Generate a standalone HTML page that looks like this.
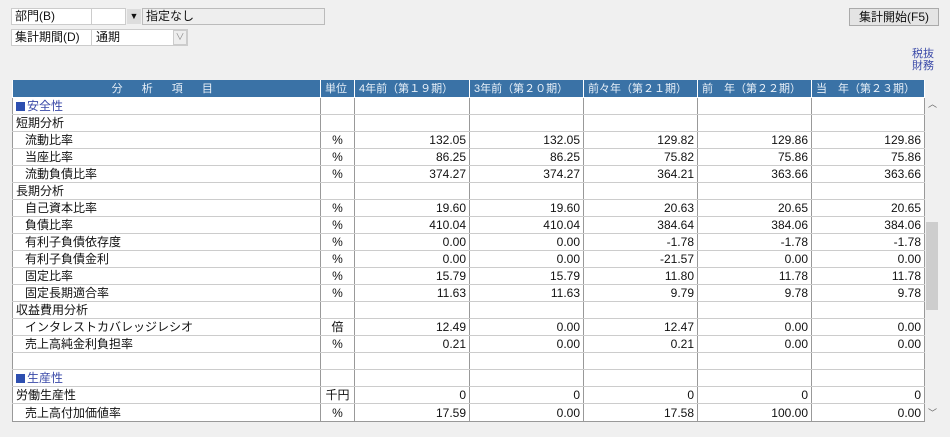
<!DOCTYPE html>
<html><head><meta charset="utf-8"><style>
body{margin:0;width:950px;height:437px;background:#f0f0f0;font-family:"Liberation Sans","Noto Sans CJK JP",sans-serif;font-size:12px;color:#111;position:relative;overflow:hidden}
.a{position:absolute;box-sizing:border-box}
table{position:absolute;left:12px;top:80px;border-collapse:collapse;table-layout:fixed;background:#fff}
td{height:16px;padding:0 3px;border-left:1px solid #999;border-right:1px solid #999;border-bottom:1px solid #ccc;white-space:nowrap;overflow:hidden;line-height:16px}
th{height:17px;background:#3a72a6;color:#e8f0f8;font-weight:normal;border-right:1px solid #fff;border-bottom:1px solid #fff;text-align:left;padding:0 4px;line-height:16px;font-size:11px;white-space:nowrap;overflow:hidden}
td.n{text-align:right}
td.u{text-align:center}
.i1{padding-left:12px}
.b{color:#3b4aa8}
.b:before{content:"";display:inline-block;width:9px;height:9px;background:#2d4fb0;margin-right:2px;vertical-align:-1px}
</style></head><body>
<div class="a" style="left:11px;top:8px;width:81px;height:17px;background:#fff;border:1px solid #ccc;padding-left:3px;line-height:15px">部門(B)</div>
<div class="a" style="left:91px;top:8px;width:35px;height:17px;background:#fff;border:1px solid #ccc"></div>
<div class="a" style="left:127px;top:9px;width:14px;height:15px;background:#ddd;text-align:center;font-size:9px;line-height:15px">▼</div>
<div class="a" style="left:142px;top:8px;width:183px;height:17px;background:#eee;border:1px solid #bbb;padding-left:3px;line-height:15px">指定なし</div>
<div class="a" style="left:11px;top:29px;width:81px;height:17px;background:#fff;border:1px solid #ccc;padding-left:3px;line-height:15px">集計期間(D)</div>
<div class="a" style="left:91px;top:29px;width:97px;height:17px;background:#fff;border:1px solid #ccc;padding-left:4px;line-height:15px">通期</div>
<div class="a" style="left:173px;top:30px;width:14px;height:15px;background:#eee;border:1px solid #ccc;text-align:center;font-size:9px;line-height:13px;color:#888">∨</div>
<div class="a" style="left:849px;top:8px;width:90px;height:18px;background:#e4e4e4;border:1px solid #aaa;text-align:center;line-height:16px">集計開始(F5)</div>
<div class="a" style="left:912px;top:48px;color:#3b4aa8;font-size:11px;line-height:12px">税抜<br>財務</div>
<table>
<colgroup><col style="width:308px"><col style="width:34px"><col style="width:115px"><col style="width:114px"><col style="width:114px"><col style="width:114px"><col style="width:113px"></colgroup>
<tr><th style="text-align:center;letter-spacing:8px">分 析 項 目</th><th>単位</th><th>4年前（第１９期）</th><th>3年前（第２０期）</th><th>前々年（第２１期）</th><th>前　年（第２２期）</th><th>当　年（第２３期）</th></tr>
<tr><td class="b">安全性</td><td></td><td></td><td></td><td></td><td></td><td></td></tr>
<tr><td>短期分析</td><td></td><td></td><td></td><td></td><td></td><td></td></tr>
<tr><td class="i1">流動比率</td><td class="u">%</td><td class="n">132.05</td><td class="n">132.05</td><td class="n">129.82</td><td class="n">129.86</td><td class="n">129.86</td></tr>
<tr><td class="i1">当座比率</td><td class="u">%</td><td class="n">86.25</td><td class="n">86.25</td><td class="n">75.82</td><td class="n">75.86</td><td class="n">75.86</td></tr>
<tr><td class="i1">流動負債比率</td><td class="u">%</td><td class="n">374.27</td><td class="n">374.27</td><td class="n">364.21</td><td class="n">363.66</td><td class="n">363.66</td></tr>
<tr><td>長期分析</td><td></td><td></td><td></td><td></td><td></td><td></td></tr>
<tr><td class="i1">自己資本比率</td><td class="u">%</td><td class="n">19.60</td><td class="n">19.60</td><td class="n">20.63</td><td class="n">20.65</td><td class="n">20.65</td></tr>
<tr><td class="i1">負債比率</td><td class="u">%</td><td class="n">410.04</td><td class="n">410.04</td><td class="n">384.64</td><td class="n">384.06</td><td class="n">384.06</td></tr>
<tr><td class="i1">有利子負債依存度</td><td class="u">%</td><td class="n">0.00</td><td class="n">0.00</td><td class="n">-1.78</td><td class="n">-1.78</td><td class="n">-1.78</td></tr>
<tr><td class="i1">有利子負債金利</td><td class="u">%</td><td class="n">0.00</td><td class="n">0.00</td><td class="n">-21.57</td><td class="n">0.00</td><td class="n">0.00</td></tr>
<tr><td class="i1">固定比率</td><td class="u">%</td><td class="n">15.79</td><td class="n">15.79</td><td class="n">11.80</td><td class="n">11.78</td><td class="n">11.78</td></tr>
<tr><td class="i1">固定長期適合率</td><td class="u">%</td><td class="n">11.63</td><td class="n">11.63</td><td class="n">9.79</td><td class="n">9.78</td><td class="n">9.78</td></tr>
<tr><td>収益費用分析</td><td></td><td></td><td></td><td></td><td></td><td></td></tr>
<tr><td class="i1">インタレストカバレッジレシオ</td><td class="u">倍</td><td class="n">12.49</td><td class="n">0.00</td><td class="n">12.47</td><td class="n">0.00</td><td class="n">0.00</td></tr>
<tr><td class="i1">売上高純金利負担率</td><td class="u">%</td><td class="n">0.21</td><td class="n">0.00</td><td class="n">0.21</td><td class="n">0.00</td><td class="n">0.00</td></tr>
<tr><td></td><td></td><td></td><td></td><td></td><td></td><td></td></tr>
<tr><td class="b">生産性</td><td></td><td></td><td></td><td></td><td></td><td></td></tr>
<tr><td>労働生産性</td><td class="u">千円</td><td class="n">0</td><td class="n">0</td><td class="n">0</td><td class="n">0</td><td class="n">0</td></tr>
<tr><td class="i1" style="border-bottom-color:#999;height:17px">売上高付加価値率</td><td class="u" style="border-bottom-color:#999">%</td><td class="n" style="border-bottom-color:#999">17.59</td><td class="n" style="border-bottom-color:#999">0.00</td><td class="n" style="border-bottom-color:#999">17.58</td><td class="n" style="border-bottom-color:#999">100.00</td><td class="n" style="border-bottom-color:#999">0.00</td></tr>
</table>
<div class="a" style="left:928px;top:97px;font-size:9px;color:#666">︿</div>
<div class="a" style="left:926px;top:222px;width:12px;height:88px;background:#cdcdcd"></div>
<div class="a" style="left:928px;top:406px;font-size:9px;color:#666">﹀</div>
</body></html>
